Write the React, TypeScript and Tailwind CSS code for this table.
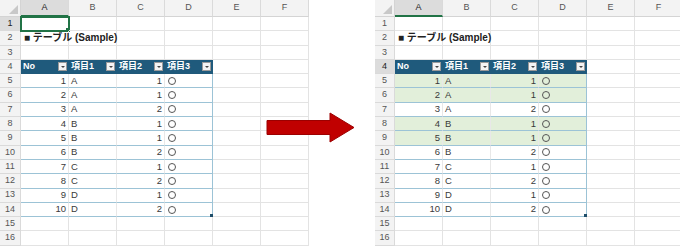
import React from "react";

const cols = ["A", "B", "C", "D", "E", "F"];
const data: [number, string, number][] = [
  [1, "A", 1], [2, "A", 1], [3, "A", 2], [4, "B", 1], [5, "B", 1],
  [6, "B", 2], [7, "C", 1], [8, "C", 2], [9, "D", 1], [10, "D", 2],
];

const font = "font-['Liberation_Sans','Noto_Sans_CJK_JP',sans-serif]";

const Drop = () => (
  <span className="ml-auto mr-[2px] flex h-[9px] w-[9px] items-center justify-center border border-[#9a9a9a] bg-[#f4f4f4]">
    <span className="h-0 w-0 border-x-[2px] border-t-[2px] border-x-transparent border-t-[#444]" />
  </span>
);

type SheetProps = { rowHead: string; selRow: number; fill: number[]; selA1?: boolean };

function Sheet({ rowHead, selRow, fill, selA1 }: SheetProps) {
  const rows = Array.from({ length: 16 }, (_, i) => i + 1);
  return (
    <div className={`flex flex-col text-[9.5px] text-[#3a3a3a] ${font}`}>
      <div className="flex h-[17px] shrink-0">
        <div className={`${rowHead} relative shrink-0 border-r border-b border-[#d4d4d4] bg-[#f3f3f3]`}>
          <span className="absolute right-[2px] bottom-[2px] h-0 w-0" style={{ borderBottom: "9px solid #c8c8c8", borderLeft: "9px solid transparent" }} />
        </div>
        {cols.map((c) => (
          <div
            key={c}
            className={`flex w-[48px] shrink-0 items-center justify-center border-r border-[#dadada] text-[9px] ${
              c === "A" ? "border-b-2 border-b-[#217346] bg-[#dcdcdc] text-[#222]" : "border-b border-b-[#d4d4d4] bg-[#f3f3f3] text-[#555]"
            }`}
          >
            {c}
          </div>
        ))}
      </div>
      {rows.map((r) => {
        const inTable = r >= 5 && r <= 14;
        const d = inTable ? data[r - 5] : null;
        const green = fill.includes(r);
        return (
          <div key={r} className="flex h-[14.3px] shrink-0">
            <div
              className={`${rowHead} flex shrink-0 items-center justify-center border-r border-b border-[#dadada] text-[9px] ${
                r === selRow ? "bg-[#dcdcdc] text-[#222]" : "bg-[#f3f3f3] text-[#555]"
              }`}
            >
              {r}
            </div>
            {cols.map((c, ci) => {
              if (r === 4 && ci < 4) {
                const label = ["No", "項目1", "項目2", "項目3"][ci];
                return (
                  <div key={c} className="flex w-[48px] shrink-0 items-center border-b border-[#20597a] bg-[#1f5a7c] pl-[2px] text-[9px] font-bold text-white">
                    {label}
                    <Drop />
                  </div>
                );
              }
              if (inTable && ci < 4 && d) {
                const bg = green ? "bg-[#e2efda]" : "bg-white";
                const right = ci === 3 ? "border-r border-r-[#9cc3d6]" : "border-r border-r-[#e8e8e8]";
                const align = ci === 0 || ci === 2 ? "justify-end pr-[2px]" : "justify-start pl-[2px]";
                return (
                  <div key={c} className={`relative flex w-[48px] shrink-0 items-center border-b border-b-[#9cc3d6] ${right} ${bg} ${align}`}>
                    {ci === 0 && d[0]}
                    {ci === 1 && d[1]}
                    {ci === 2 && d[2]}
                    {ci === 3 && <span className="ml-[1px] inline-block h-[8px] w-[8px] rounded-full border border-[#555]" />}
                    {r === 14 && ci === 3 && (
                      <span className="absolute right-[-1px] bottom-[-1px] h-[3px] w-[3px] bg-[#1f4e6a]" />
                    )}
                  </div>
                );
              }
              const sel = selA1 && r === 1 && ci === 0;
              return (
                <div
                  key={c}
                  className={`relative flex w-[48px] shrink-0 items-center border-r border-b border-[#e3e3e3] ${
                    sel ? "outline-2 -outline-offset-1 outline-[#217346]" : ""
                  }`}
                >
                  {r === 2 && ci === 0 && (
                    <span className="absolute left-[3px] z-10 whitespace-nowrap text-[10px] font-bold text-[#222]">■ テーブル (Sample)</span>
                  )}
                  {sel && <span className="absolute right-[-2px] bottom-[-2px] h-[4px] w-[4px] bg-[#217346]" />}
                </div>
              );
            })}
          </div>
        );
      })}
    </div>
  );
}

export default function App() {
  return (
    <div className="relative flex h-[248px] w-[680px] overflow-hidden bg-white">
      <div className="w-[375px] shrink-0">
        <Sheet rowHead="w-[21px]" selRow={1} fill={[]} selA1 />
      </div>
      <div className="shrink-0">
        <Sheet rowHead="w-[20px]" selRow={4} fill={[5, 6, 8, 9]} />
      </div>
      <svg className="absolute left-[266px] top-[112px]" width="90" height="32" viewBox="0 0 90 32">
        <path d="M1 8.5 H64 V1 L88 15.5 L64 30 V22.5 H1 Z" fill="#c00000" stroke="#9c0000" strokeWidth="1" />
      </svg>
    </div>
  );
}
